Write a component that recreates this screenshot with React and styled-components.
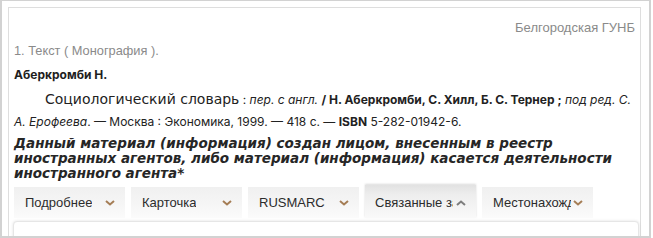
import React from 'react'
import styled, { createGlobalStyle } from 'styled-components'

const GlobalStyle = createGlobalStyle`
  html, body { margin: 0; padding: 0; background: #fff; }
  body { width: 653px; height: 238px; overflow: hidden; }
`;

const Frame = styled.div`
  box-sizing: border-box;
  width: 651px;
  height: 238px;
  border: 2px solid #d2d2d2;
  border-top-width: 1px;
  padding: 6px 8px 0 6px;
  overflow: hidden;
`;

const Panel = styled.div`
  border: 1px solid #dedede;
  border-bottom: none;
  padding: 12px 5px 0 5px;
  height: 260px;
  font-family: Inter, "Noto Sans", sans-serif;
  color: #222;
`;

const Source = styled.div`
  text-align: right;
  font-family: "Liberation Sans", Arial, sans-serif;
  font-size: 13px;
  line-height: 16px;
  color: #8a8a8a;
`;

const DocType = styled.div`
  margin-top: 7px;
  font-family: "Liberation Sans", Arial, sans-serif;
  font-size: 12.8px;
  line-height: 16px;
  color: #8a8a8a;
`;

const Author = styled.div`
  margin-top: 8px;
  font-size: 12px;
  font-weight: 700;
  line-height: 16px;
  color: #1e1e1e;
`;

const Record = styled.p`
  margin: 5px 0 0;
  text-indent: 31px;
  font-size: 12px;
  line-height: 22px;
  color: #222;
`;

const Title = styled.span`
  font-family: "DejaVu Sans", sans-serif;
  font-size: 14px;
`;

const Em = styled.i`
  font-style: italic;
`;

const B = styled.b`
  font-weight: 700;
`;

const Warning = styled.div`
  margin-top: 3px;
  font-family: "DejaVu Sans", sans-serif;
  font-size: 13.5px;
  font-weight: 700;
  font-style: italic;
  line-height: 15px;
  color: #262626;
`;

const Tabs = styled.div`
  display: flex;
  gap: 6px;
  margin-top: 4px;
  align-items: flex-end;
`;

const Tab = styled.div`
  box-sizing: border-box;
  width: 111px;
  height: ${({ $active }) => ($active ? '33px' : '31px')};
  display: flex;
  align-items: center;
  justify-content: space-between;
  padding: ${({ $active }) => ($active ? '2px 10px 0 10px' : '0 10px 0 11px')};
  font-family: "Liberation Sans", Arial, sans-serif;
  font-size: 13px;
  color: #2c2c2c;
  background: ${({ $active }) =>
    $active
      ? 'linear-gradient(to bottom, #e2e2e2 0%, #eeeeee 30%, #f9f9f9 100%)'
      : 'linear-gradient(to bottom, #f0f0f0 0%, #f6f6f6 60%, #fbfbfb 100%)'};
  box-shadow: ${({ $active }) => ($active ? '0 -1px 2px rgba(0,0,0,0.15)' : 'none')};
`;

const TabLabel = styled.span`
  overflow: hidden;
  white-space: nowrap;
  max-width: 78px;
`;

const Chevron = styled.svg`
  flex: none;
  width: 10px;
  height: 6px;
`;

const Content = styled.div`
  margin: 3px 0 0 -1px;
  width: 624px;
  height: 40px;
  border: 1px solid #e6e6e6;
  border-radius: 4px;
  box-shadow: 0 0 3px rgba(0,0,0,0.12);
  background: #fff;
`;

const Arrow = ({ up }) => (
  <Chevron viewBox="0 0 10 6">
    <polyline
      points={up ? '1,5 5,1.5 9,5' : '1,1 5,4.5 9,1'}
      fill="none"
      stroke={up ? '#7d7d7d' : '#a57d55'}
      strokeWidth="2"
    />
  </Chevron>
);

const tabs = [
  { label: 'Подробнее' },
  { label: 'Карточка' },
  { label: 'RUSMARC' },
  { label: 'Связанные записи', active: true },
  { label: 'Местонахождение' },
];

const App = () => (
  <>
    <GlobalStyle />
    <Frame>
      <Panel>
        <Source>Белгородская ГУНБ</Source>
        <DocType>1. Текст ( Монография ).</DocType>
        <Author>Аберкромби Н.</Author>
        <Record>
          <Title>Социологический словарь</Title> : <Em>пер. с англ.</Em>{' '}
          <B>/ Н. Аберкромби, С. Хилл, Б. С. Тернер ;</B> <Em>под ред. С. А. Ерофеева</Em>. — Москва :
          Экономика, 1999. — 418 с. — <B>ISBN</B> 5-282-01942-6.
        </Record>
        <Warning>
          Данный материал (информация) создан лицом, внесенным в реестр иностранных агентов, либо
          материал (информация) касается деятельности иностранного агента*
        </Warning>
        <Tabs>
          {tabs.map((t) => (
            <Tab key={t.label} $active={t.active}>
              <TabLabel>{t.label}</TabLabel>
              <Arrow up={t.active} />
            </Tab>
          ))}
        </Tabs>
        <Content />
      </Panel>
    </Frame>
  </>
);

export default App
